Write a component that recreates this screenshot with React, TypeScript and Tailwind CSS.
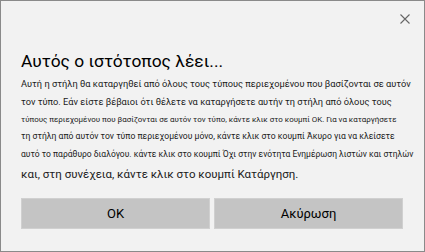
import React from "react";

export default function App() {
  const font = { fontFamily: 'Roboto, "Noto Sans", sans-serif' };
  return (
    <div
      className="w-[425px] h-[252px] bg-[#f2f2f2] border border-[#8a8a8a] flex flex-col text-[#111]"
      style={font}
    >
      <div className="flex justify-end pt-[13px] pr-[14px] h-[36px]">
        <svg width="10" height="10" viewBox="0 0 10 10" className="text-[#666]">
          <path d="M0.5 0.5 L9.5 9.5 M9.5 0.5 L0.5 9.5" stroke="currentColor" strokeWidth="1.1" />
        </svg>
      </div>
      <div className="pl-[20px] text-[17.4px] leading-[24px] text-black mt-[12px]">
        Αυτός ο ιστότοπος λέει...
      </div>
      <div className="pl-[20px] mt-[1px] flex flex-col whitespace-nowrap text-[#1a1a1a]">
        <div className="text-[9.25px] leading-[19px]">
          Αυτή η στήλη θα καταργηθεί από όλους τους τύπους περιεχομένου που βασίζονται σε αυτόν
        </div>
        <div className="text-[9.25px] leading-[18px]">
          τον τύπο. Εάν είστε βέβαιοι ότι θέλετε να καταργήσετε αυτήν τη στήλη από όλους τους
        </div>
        <div className="text-[7.95px] leading-[17px]">
          τύπους περιεχομένου που βασίζονται σε αυτόν τον τύπο, κάντε κλικ στο κουμπί OK. Για να καταργήσετε
        </div>
        <div className="text-[8.6px] leading-[17px]">
          τη στήλη από αυτόν τον τύπο περιεχομένου μόνο, κάντε κλικ στο κουμπί Άκυρο για να κλείσετε
        </div>
        <div className="text-[8.5px] leading-[19px]">
          αυτό το παράθυρο διαλόγου. κάντε κλικ στο κουμπί Όχι στην ενότητα Ενημέρωση λιστών και στηλών
        </div>
        <div className="text-[11.5px] leading-[20px]">
          και, στη συνέχεια, κάντε κλικ στο κουμπί Κατάργηση.
        </div>
      </div>
      <div className="flex gap-[4px] pl-[20px] mt-auto mb-[22px]">
        <button className="w-[189px] h-[31px] bg-[#c4c4c4] border border-[#d0d0d0] text-[13px] text-black">
          OK
        </button>
        <button className="w-[189px] h-[31px] bg-[#c4c4c4] border border-[#d0d0d0] text-[13px] text-black">
          Ακύρωση
        </button>
      </div>
    </div>
  );
}
